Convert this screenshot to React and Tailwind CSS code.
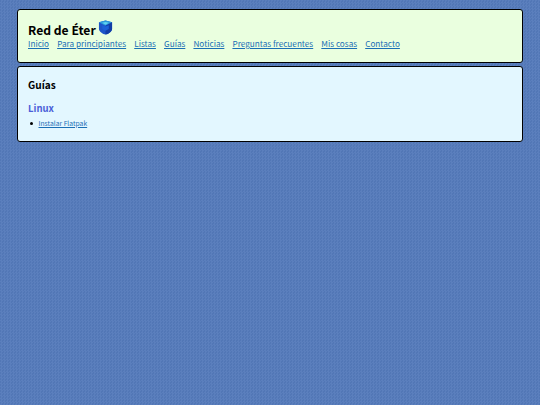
const links = ["Inicio", "Para principiantes", "Listas", "Guías", "Noticias", "Preguntas frecuentes", "Mis cosas", "Contacto"];

function Gem() {
  return (
    <svg width="15" height="15" viewBox="0 0 16 16" className="ml-[2px] mb-[5px]">
      <path d="M8 .5 15 2.500V9.500C15 12 11 15 8 15.500 5 15 1 12 1 9.500V2.500z" fill="#1d55c9" />
      <path d="M1 2.500 8 .5 15 2.500 8 6z" fill="#2a9bdc" />
      <path d="M4.500 3 8 2l3.500 1L8 5z" fill="#63d3ee" />
      <path d="M8 6 15 2.500V9.500C15 12 11 15 8 15.500z" fill="#123da6" />
      <path d="M8 7l3.500-1.500v4L8 11.500 4.500 9.500v-4z" fill="#1c60d6" />
    </svg>
  );
}

export default function App() {
  return (
    <div
      className="min-h-[405px] px-[17px] py-[9px] flex flex-col gap-[3px] font-['Noto_Sans_CJK_JP',sans-serif] bg-[conic-gradient(#5b7fbd_25%,#5277b6_0_50%,#5b7fbd_0_75%,#5277b6_0)] bg-[length:3px_3px]"
    >
      <header className="h-[54px] rounded-[3px] border-[1.5px] border-black bg-[#eaffdf] px-[10px] pt-[12px]">
        <div className="flex items-center h-[15px]">
          <h1 className="text-[12.150px] leading-[15px] font-bold text-black">Red de Éter</h1>
          <Gem />
        </div>
        <nav className="flex gap-[8.100px] text-[8.200px] leading-[13px]">
          {links.map((l) => (
            <a key={l} href="#" className="text-[#1a6fb5] underline">{l}</a>
          ))}
        </nav>
      </header>
      <main className="h-[76px] rounded-[3px] border-[1.5px] border-black bg-[#e3f7ff] px-[10px] pt-[10px]">
        <h2 className="text-[10.100px] leading-[16px] font-bold text-black">Guías</h2>
        <h3 className="mt-[8px] text-[9.500px] leading-[15px] font-bold text-[#4a5fd8]">Linux</h3>
        <ul className="mt-[2px] text-[6.750px] leading-[11px]">
          <li className="flex items-center gap-[6px] pl-[2px]">
            <span className="size-[2.500px] rounded-full bg-black" />
            <a href="#" className="text-[#1a6fb5] underline">Instalar Flatpak</a>
          </li>
        </ul>
      </main>
    </div>
  );
}
